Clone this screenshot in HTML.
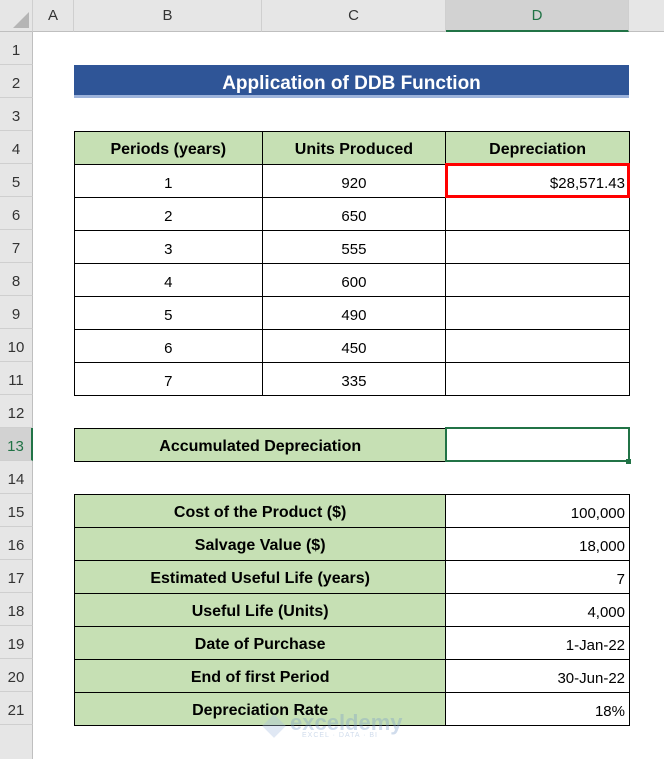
<!DOCTYPE html>
<html><head><meta charset="utf-8"><style>
*{margin:0;padding:0;box-sizing:border-box}
body{width:664px;height:759px;background:#fff;position:relative;overflow:hidden;font-family:"Liberation Sans",Calibri,sans-serif;color:#000}
.ab{position:absolute}
.colh{top:0;height:32px;background:#e6e6e6;border-bottom:1px solid #bfbfbf;border-right:1px solid #cfcfcf;font-size:15px;color:#333;text-align:center;line-height:32px}
.rowh{left:0;width:33px;height:33px;background:#e6e6e6;border-bottom:1px solid #cfcfcf;border-right:1px solid #bfbfbf;font-size:15px;color:#333;text-align:center;line-height:38px}
table{position:absolute;border-collapse:collapse;font-size:15px}
td{border:1px solid #000;height:33px;padding:4px 4px 0;text-align:center;vertical-align:middle}
.g{background:#c6e0b4;font-weight:bold;font-size:16px}
.r{text-align:right}
</style></head><body>
<div class="ab" style="left:0;top:0;width:664px;height:32px;background:#e6e6e6;border-bottom:1px solid #bfbfbf"></div>
<div class="ab colh" style="left:0;width:33px"><div class="ab" style="right:3px;bottom:3px;width:0;height:0;border-left:16px solid transparent;border-bottom:16px solid #b5b5b5"></div></div>
<div class="ab colh" style="left:33px;width:41px">A</div>
<div class="ab colh" style="left:74px;width:188px">B</div>
<div class="ab colh" style="left:262px;width:184px">C</div>
<div class="ab colh" style="left:446px;width:183px;background:#d2d2d2;border-bottom:2px solid #217346;color:#217346">D</div>
<div class="ab" style="left:0;top:32px;width:33px;height:727px;background:#e6e6e6;border-right:1px solid #bfbfbf"></div>
<div class="ab rowh" style="top:32px">1</div>
<div class="ab rowh" style="top:65px">2</div>
<div class="ab rowh" style="top:98px">3</div>
<div class="ab rowh" style="top:131px">4</div>
<div class="ab rowh" style="top:164px">5</div>
<div class="ab rowh" style="top:197px">6</div>
<div class="ab rowh" style="top:230px">7</div>
<div class="ab rowh" style="top:263px">8</div>
<div class="ab rowh" style="top:296px">9</div>
<div class="ab rowh" style="top:329px">10</div>
<div class="ab rowh" style="top:362px">11</div>
<div class="ab rowh" style="top:395px">12</div>
<div class="ab rowh" style="top:428px;background:#d2d2d2;border-right:2px solid #217346;color:#217346">13</div>
<div class="ab rowh" style="top:461px">14</div>
<div class="ab rowh" style="top:494px">15</div>
<div class="ab rowh" style="top:527px">16</div>
<div class="ab rowh" style="top:560px">17</div>
<div class="ab rowh" style="top:593px">18</div>
<div class="ab rowh" style="top:626px">19</div>
<div class="ab rowh" style="top:659px">20</div>
<div class="ab rowh" style="top:692px">21</div>

<div class="ab" style="left:74px;top:65px;width:555px;height:33px;background:#2f5597;border-bottom:3px solid #9db3db;color:#fff;font-weight:bold;font-size:19px;text-align:center;line-height:37px">Application of DDB Function</div>

<table style="left:74px;top:131px;width:556px">
<colgroup><col style="width:188px"><col style="width:184px"><col style="width:184px"></colgroup>
<tr><td class="g">Periods (years)</td><td class="g">Units Produced</td><td class="g">Depreciation</td></tr>
<tr><td>1</td><td>920</td><td class="r">$28,571.43</td></tr>
<tr><td>2</td><td>650</td><td></td></tr>
<tr><td>3</td><td>555</td><td></td></tr>
<tr><td>4</td><td>600</td><td></td></tr>
<tr><td>5</td><td>490</td><td></td></tr>
<tr><td>6</td><td>450</td><td></td></tr>
<tr><td>7</td><td>335</td><td></td></tr>
</table>
<div class="ab" style="left:445px;top:163px;width:185px;height:35px;border:3px solid #ff0000"></div>

<table style="left:74px;top:428px;width:556px">
<colgroup><col style="width:372px"><col style="width:184px"></colgroup>
<tr><td class="g">Accumulated Depreciation</td><td></td></tr>
</table>
<div class="ab" style="left:445px;top:427px;width:185px;height:35px;border:2px solid #217346"></div>
<div class="ab" style="left:626px;top:459px;width:5px;height:5px;background:#217346"></div>

<table style="left:74px;top:494px;width:556px">
<colgroup><col style="width:372px"><col style="width:184px"></colgroup>
<tr><td class="g">Cost of the Product ($)</td><td class="r">100,000</td></tr>
<tr><td class="g">Salvage Value ($)</td><td class="r">18,000</td></tr>
<tr><td class="g">Estimated Useful Life (years)</td><td class="r">7</td></tr>
<tr><td class="g">Useful Life (Units)</td><td class="r">4,000</td></tr>
<tr><td class="g">Date of Purchase</td><td class="r">1-Jan-22</td></tr>
<tr><td class="g">End of first Period</td><td class="r">30-Jun-22</td></tr>
<tr><td class="g">Depreciation Rate</td><td class="r">18%</td></tr>
</table>
<div class="ab" style="left:262px;top:712px;width:140px;height:30px;opacity:0.35;color:#7a9cc9">
<div class="ab" style="left:0;top:2px;width:24px;height:24px;background:#a9c0e0;transform:rotate(45deg) scale(.7)"></div>
<div class="ab" style="left:28px;top:-2px;font-size:22px;font-weight:bold">exceldemy</div>
<div class="ab" style="left:40px;top:20px;font-size:7px;letter-spacing:1px">EXCEL · DATA · BI</div>
</div>
</body></html>
